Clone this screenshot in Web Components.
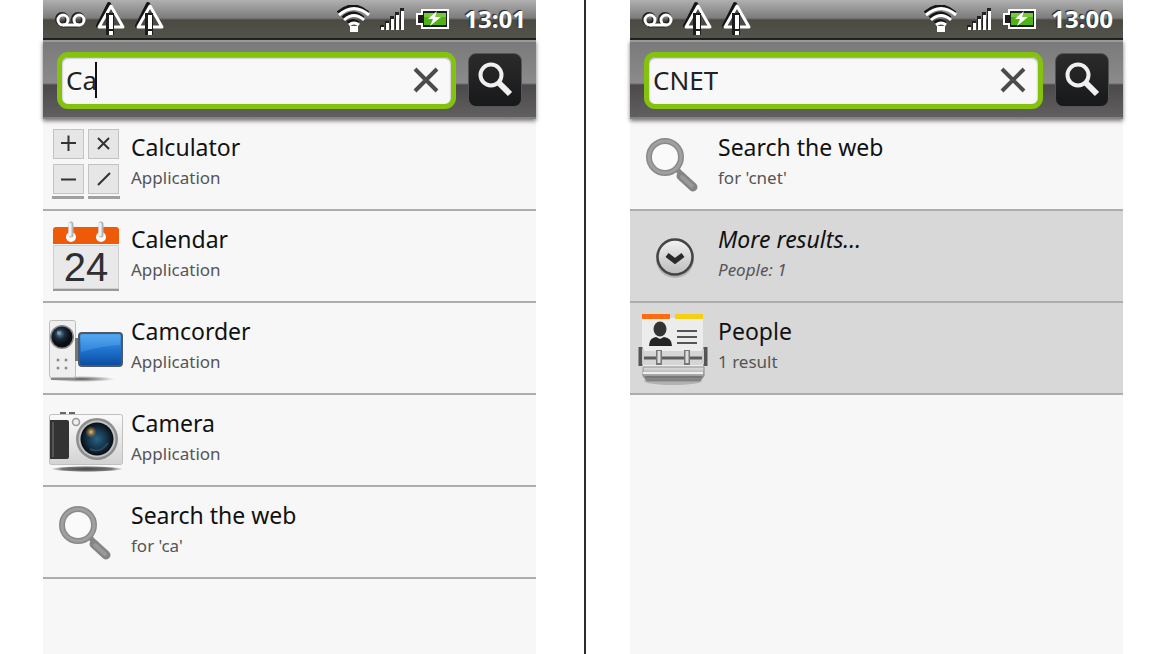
<!DOCTYPE html>
<html lang="en">
<head>
<meta charset="utf-8">
<meta name="viewport" content="width=device-width, initial-scale=1">
<title>Quick search</title>
<style>
    html, body { height: 100%; }

    body {
        margin: 0;
        background: #fff;
        color: #111;
        font-family: "Noto Sans", "Open Sans", sans-serif;
    }

    .screens {
        display: grid;
        grid-template-columns: 1fr 2px 1fr;
        min-height: 100%;
    }

    .divider { background: #2b2b2b; }
    .screen { margin: 0 48px 0 43px; }
    .divider + .screen { margin: 0 47px 0 44px; }
</style>
</head>
<body>
<main class="screens">
    <phone-screen class="screen">
        <status-bar slot="status" time="13:01"></status-bar>
        <search-bar slot="search" value="Ca" editing></search-bar>
        <result-row><app-icon slot="icon" name="calculator"></app-icon>Calculator<span slot="detail">Application</span></result-row>
        <result-row><app-icon slot="icon" name="calendar"></app-icon>Calendar<span slot="detail">Application</span></result-row>
        <result-row><app-icon slot="icon" name="camcorder"></app-icon>Camcorder<span slot="detail">Application</span></result-row>
        <result-row><app-icon slot="icon" name="camera"></app-icon>Camera<span slot="detail">Application</span></result-row>
        <result-row><app-icon slot="icon" name="search"></app-icon>Search the web<span slot="detail">for 'ca'</span></result-row>
    </phone-screen>
    <div class="divider"></div>
    <phone-screen class="screen">
        <status-bar slot="status" time="13:00"></status-bar>
        <search-bar slot="search" value="CNET"></search-bar>
        <result-row><app-icon slot="icon" name="search"></app-icon>Search the web<span slot="detail">for 'cnet'</span></result-row>
        <result-row class="more" shaded><app-icon slot="icon" name="more"></app-icon>More results...<span slot="detail">People: 1</span></result-row>
        <result-row shaded><app-icon slot="icon" name="people"></app-icon>People<span slot="detail">1 result</span></result-row>
    </phone-screen>
</main>

<script>
// Every icon is drawn in the 88x90 icon column of a row
const ICONS = {
    calculator: `
        <g fill="#e6e6e6" stroke="#c3c3c3">
            <rect x="10.5" y="10.5" width="30" height="29"/><rect x="45.5" y="10.5" width="30" height="29"/>
            <rect x="10.5" y="45.5" width="30" height="29"/><rect x="45.5" y="45.5" width="30" height="29"/>
        </g>
        <path d="M9 78.5H41M45 78.5H77" stroke="#a0a0a0" stroke-width="3"/>
        <path d="M18 24H33M25.5 16.5V32M55 19L66 30M66 19L55 30M18 60.5H33M55 66L67 54" stroke="#333" stroke-width="2" fill="none"/>`,
    calendar: `
        <path d="M10 77H76V80H10Z" fill="#999"/>
        <rect x="10.5" y="34.5" width="65" height="43" fill="#e9e9e9" stroke="#cfcfcf"/>
        <path d="M10 33V19Q10 16 13 16H73Q76 16 76 19V33Z" fill="#ee5a08"/>
        <g fill="#fff"><circle cx="28" cy="26" r="5"/><circle cx="58" cy="26" r="5"/></g>
        <path d="M28 13V24M58 13V24" stroke="#aeb6bd" stroke-width="5" stroke-linecap="round"/>
        <path d="M27 13V24M57 13V24" stroke="#eef2f5" stroke-width="3" stroke-linecap="round"/>
        <text x="43" y="70" text-anchor="middle" font-family="Liberation Sans, sans-serif" font-size="40" fill="#2f2f2f">24</text>`,
    camcorder: `
        <defs>
            <linearGradient id="screen" x2="0" y2="1"><stop offset="0" stop-color="#4ba4ee"/><stop offset=".5" stop-color="#1f74cf"/><stop offset="1" stop-color="#0b4a9e"/></linearGradient>
            <radialGradient id="lens" cx=".4" cy=".35"><stop offset="0" stop-color="#6388a0"/><stop offset=".5" stop-color="#182b3d"/><stop offset="1" stop-color="#0c0d10"/></radialGradient>
            <radialGradient id="shade"><stop offset="0" stop-color="#555"/><stop offset="1" stop-color="#555" stop-opacity="0"/></radialGradient>
        </defs>
        <ellipse cx="38" cy="76" rx="34" ry="3" fill="url(#shade)"/>
        <path d="M8 76H32" stroke="#888" stroke-width="2"/>
        <rect x="6.5" y="17.5" width="26" height="57" rx="2" fill="#efefef" stroke="#bdbdbd"/>
        <circle cx="19" cy="34" r="12" fill="#888"/><circle cx="19" cy="34" r="10.5" fill="url(#lens)"/>
        <circle cx="16" cy="30" r="2" fill="#7f9aa8"/>
        <g fill="#8c8c8c"><circle cx="15" cy="57" r="1.5"/><circle cx="23" cy="57" r="1.5"/><circle cx="15" cy="65" r="1.5"/><circle cx="23" cy="65" r="1.5"/></g>
        <rect x="32" y="35" width="5" height="23" fill="#777"/>
        <rect x="36" y="30" width="43" height="33" rx="3" fill="url(#screen)" stroke="#4b5a6a" stroke-width="2"/>
        <path d="M38 32H77V42Q58 43 38 49Z" fill="#7cc3ff" opacity=".25"/>`,
    camera: `
        <defs>
            <linearGradient id="body" x2="0" y2="1"><stop offset="0" stop-color="#fafafa"/><stop offset="1" stop-color="#d3d3d3"/></linearGradient>
            <radialGradient id="glass"><stop offset="0" stop-color="#2b6384"/><stop offset=".55" stop-color="#15364e"/><stop offset="1" stop-color="#080d12"/></radialGradient>
            <radialGradient id="glint"><stop offset="0" stop-color="#f6c477"/><stop offset="1" stop-color="#a8681f" stop-opacity="0"/></radialGradient>
            <radialGradient id="ground"><stop offset="0" stop-color="#444"/><stop offset=".7" stop-color="#777"/><stop offset="1" stop-color="#777" stop-opacity="0"/></radialGradient>
        </defs>
        <ellipse cx="44" cy="74" rx="36" ry="3" fill="url(#ground)"/>
        <path d="M17 18H23M26 18H32" stroke="#666" stroke-width="2"/>
        <rect x="6.5" y="19.5" width="73" height="50" rx="2" fill="url(#body)" stroke="#c0c0c0"/>
        <path d="M7 25H24Q26 25 26 27V62Q26 64 24 64H7Z" fill="#333"/>
        <path d="M10 27V62" stroke="#555" stroke-width="2"/>
        <circle cx="33" cy="27" r="3.5" fill="#eee" stroke="#999" stroke-width="1.5"/>
        <circle cx="54" cy="44" r="21" fill="#8e8e8e"/><circle cx="54" cy="44" r="18.5" fill="#c4c4c4"/>
        <circle cx="54" cy="44" r="16.5" fill="url(#glass)"/>
        <circle cx="48" cy="37" r="6" fill="url(#glint)"/>
        <path d="M47 54Q57 59 65 48" stroke="#4d7788" stroke-width="2" fill="none" opacity=".4"/>`,
    search: `
        <path d="M51 57L63 68" stroke="#858585" stroke-width="9" stroke-linecap="round"/>
        <path d="M45 48L52 56" stroke="#858585" stroke-width="5"/>
        <circle cx="35" cy="38" r="16" fill="#fafafa" stroke="#8a8a8a" stroke-width="6"/>
        <circle cx="35" cy="38" r="16" fill="none" stroke="#a0a0a0" stroke-width="3"/>
        <path d="M52 58L62 67" stroke="#999" stroke-width="4" stroke-linecap="round"/>`,
    more: `
        <defs><linearGradient id="knob" x2="0" y2="1"><stop offset="0" stop-color="#f2f2f2"/><stop offset="1" stop-color="#bcbcbc"/></linearGradient></defs>
        <circle cx="45" cy="48" r="19" fill="#999" opacity=".6"/>
        <circle cx="45" cy="46" r="17.5" fill="url(#knob)" stroke="#444" stroke-width="2.5"/>
        <path d="M37 44L45 50L53 44" fill="none" stroke="#2b2b2b" stroke-width="5"/>`,
    people: `
        <defs><linearGradient id="base" x2="0" y2="1"><stop offset="0" stop-color="#e2e2e2"/><stop offset="1" stop-color="#777"/></linearGradient></defs>
        <ellipse cx="43" cy="78" rx="29" ry="4" fill="#b2b2b2"/>
        <rect x="12" y="15" width="61" height="55" fill="#ececec"/>
        <path d="M12 11H40V16H12Z" fill="#ff6b0f"/><path d="M45 11H73V16H45Z" fill="#f5cf12"/>
        <ellipse cx="30" cy="26" rx="6.5" ry="7.5" fill="#333"/>
        <path d="M19 43Q19 35 26 34L30 36L34 34Q42 35 42 43Z" fill="#242424"/>
        <path d="M47 28H67M47 34H67M47 40H67" stroke="#555" stroke-width="2"/>
        <path d="M14 48H72V62H14Z" fill="#d5d5d5"/>
        <path d="M10 55H76" stroke="#5c5c5c" stroke-width="3"/>
        <path d="M10.5 44V63M75.5 44V63" stroke="#555" stroke-width="4"/><path d="M13 46V61M73 46V61" stroke="#ccc" stroke-width="2"/>
        <path d="M29 47V62M57 47V62" stroke="#777" stroke-width="6"/><path d="M29 48V60M57 48V60" stroke="#ddd" stroke-width="3"/>
        <path d="M13 64H74V73L70 78H17L13 73Z" fill="url(#base)" stroke="#8a8a8a"/>
        <path d="M13 70H73" stroke="#efefef" stroke-width="2"/><path d="M15 74H72" stroke="#777" stroke-width="2"/>`
};

class AppIcon extends HTMLElement {
    constructor() {
        super();
        this.attachShadow({ mode: 'open' });
    }

    connectedCallback() {
        this.shadowRoot.innerHTML = `
        <style>
        :host { display: block; }
        svg { display: block; width: 88px; height: 90px; }
        </style>
        <svg viewBox="0 0 88 90" aria-hidden="true">${ICONS[this.getAttribute('name')]}</svg>
        `;
    }
}

class StatusBar extends HTMLElement {
    constructor() {
        super();
        this.attachShadow({ mode: 'open' });
    }

    connectedCallback() {
        const warning = `
            <svg width="30" height="36" viewBox="0 0 30 36" stroke-linejoin="round">
                <path d="M13 3L24 25H2Z" fill="none" stroke="#151515" stroke-width="4"/>
                <path d="M15 5L27 26H3Z" fill="#4a4a48" stroke="#fff" stroke-width="3"/>
                <path d="M14 12V34" stroke="#1c1c1c" stroke-width="8"/>
                <path d="M15 14V28M15 30V34" stroke="#fff" stroke-width="4"/>
            </svg>`;

        this.shadowRoot.innerHTML = `
        <style>
        :host {
            display: flex;
            align-items: center;
            gap: 9px;
            box-sizing: border-box;
            height: 40px;
            padding: 0 10px 0 12px;
            border-bottom: 2px solid #1b1b19;
            background: linear-gradient(#b0b0b0, #7c7c7c 18px, #4a4a42 20px, #53534d);
        }

        svg { display: block; flex: none; }

        .clock {
            margin-left: 5px;
            color: #fff;
            font-size: 24px;
            font-weight: bold;
            line-height: 32px;
            text-shadow: -1px -1px 1px #222;
        }

        .space { flex: 1; }
        </style>
        <svg width="32" height="20" viewBox="0 0 32 20" fill="none">
            <path d="M6 16H24" stroke="#222" stroke-width="5"/>
            <g stroke="#222" stroke-width="4"><circle cx="7" cy="10" r="5"/><circle cx="23" cy="10" r="5"/></g>
            <g stroke="#fff" stroke-width="3"><circle cx="8" cy="11" r="5"/><circle cx="24" cy="11" r="5"/><path d="M8 16H24"/></g>
        </svg>
        ${warning}
        ${warning}
        <span class="space"></span>
        <svg width="34" height="28" viewBox="0 0 34 28" fill="none">
            <g stroke="#151515" stroke-width="4" transform="translate(-1 -2)"><path d="M2 10Q17 -3 32 10M7 15Q17 6 27 15M12 20Q17 16 22 20"/></g>
            <path d="M2 10Q17 -3 32 10M7 15Q17 6 27 15M12 20Q17 16 22 20" stroke="#fff" stroke-width="3"/>
            <rect x="13" y="21" width="8" height="6" fill="#fff"/>
        </svg>
        <svg width="25" height="24" viewBox="0 0 25 24">
            <path d="M0 18H4V22H0ZM5 14H9V22H5ZM10 9H14V22H10ZM15 5H19V22H15ZM20 1H24V22H20Z" fill="#222"/>
            <path d="M1 20H4V23H1ZM6 16H9V23H6ZM11 12H14V23H11ZM16 8H19V23H16ZM21 4H24V23H21Z" fill="#fff"/>
        </svg>
        <svg width="36" height="22" viewBox="0 0 36 22">
            <path d="M8 2H34V20H8V16H3V6H8Z" fill="#1c1c1c" stroke="#fff" stroke-width="2"/>
            <rect x="10" y="5" width="22" height="12" fill="#4db414"/><rect x="10" y="5" width="22" height="4" fill="#78c83d"/>
            <path d="M23 3L14 11H19L16 18L27 9H21Z" fill="#fff"/>
        </svg>
        <span class="clock">${this.getAttribute('time')}</span>
        `;
    }
}

class SearchBar extends HTMLElement {
    constructor() {
        super();
        this.attachShadow({ mode: 'open' });
    }

    connectedCallback() {
        const caret = this.hasAttribute('editing') ? '<span class="caret"></span>' : '';

        this.shadowRoot.innerHTML = `
        <style>
        :host {
            position: relative;
            display: flex;
            align-items: center;
            gap: 12px;
            box-sizing: border-box;
            height: 79px;
            padding: 1px 14px 0 14px;
            border-top: 2px solid #999;
            border-bottom: 2px solid #858384;
            background: linear-gradient(#7a7a7a, #8b8b8b 41px, #4c494b 43px, #625f61);
            box-shadow: 0 2px 4px #777;
        }

        .field {
            display: flex;
            align-items: center;
            flex: 1;
            min-width: 0;
            box-sizing: border-box;
            height: 57px;
            padding: 0 12px 0 4px;
            border: 5px solid #84c20e;
            border-radius: 11px;
            background: #f8f8f8;
            box-shadow: inset 0 1px 2px #8a86a0;
            cursor: text;
        }

        input {
            field-sizing: content;
            min-width: 0;
            padding: 0;
            border: 0;
            outline: 0;
            background: none;
            color: #222;
            font: inherit;
            font-size: 26px;
            line-height: 36px;
        }

        .caret {
            width: 2px;
            height: 36px;
            margin-left: -2px;
            background: #111;
        }

        button {
            display: grid;
            place-items: center;
            padding: 0;
            border: 0;
            background: none;
        }

        .clear { margin-left: auto; }

        .go {
            width: 54px;
            height: 54px;
            border: 1px solid #555;
            border-radius: 8px;
            background: linear-gradient(#2b2b2b, #17181a);
        }
        </style>
        <label class="field">
            <input type="text" aria-label="Search" value="${this.getAttribute('value')}">${caret}
            <button class="clear" type="button" aria-label="Clear">
                <svg width="26" height="26" viewBox="0 0 26 26"><path d="M2 2L24 24M24 2L2 24" stroke="#4b4b4b" stroke-width="4"/></svg>
            </button>
        </label>
        <button class="go" type="button" aria-label="Go">
            <svg width="36" height="36" viewBox="0 0 36 36" fill="none" stroke="#f0f0f0">
                <circle cx="14" cy="13" r="10.5" stroke-width="4"/>
                <path d="M22 21L33 32" stroke-width="6"/>
            </svg>
        </button>
        `;

        const input = this.shadowRoot.querySelector('input');
        this.shadowRoot.querySelector('.clear').addEventListener('click', () => {
            input.value = '';
            input.focus();
        });
    }
}

class ResultRow extends HTMLElement {
    constructor() {
        super();
        this.attachShadow({ mode: 'open' });

        this.shadowRoot.innerHTML = `
        <style>
        :host {
            display: block;
            border-bottom: 2px solid #adadad;
        }

        :host([shaded]) { background: #d8d8d8; }
        :host(.more) { font-style: italic; }

        a {
            display: flex;
            color: inherit;
            text-decoration: none;
        }

        .text {
            display: flex;
            flex-direction: column;
            gap: 3px;
            padding-top: 12px;
        }

        .title {
            font-size: 23px;
            line-height: 32px;
        }

        .detail {
            color: #555;
            font-size: 17px;
            line-height: 24px;
        }
        </style>
        <a href="#">
            <slot name="icon"></slot>
            <span class="text">
                <span class="title"><slot></slot></span>
                <span class="detail"><slot name="detail"></slot></span>
            </span>
        </a>
        `;
    }
}

class PhoneScreen extends HTMLElement {
    constructor() {
        super();
        this.attachShadow({ mode: 'open' });

        this.shadowRoot.innerHTML = `
        <style>
        :host {
            display: flex;
            flex-direction: column;
            background: #f7f7f7;
        }
        </style>
        <slot name="status"></slot>
        <slot name="search"></slot>
        <slot></slot>
        `;
    }
}

customElements.define('app-icon', AppIcon);
customElements.define('status-bar', StatusBar);
customElements.define('search-bar', SearchBar);
customElements.define('result-row', ResultRow);
customElements.define('phone-screen', PhoneScreen);
</script>
</body>
</html>
